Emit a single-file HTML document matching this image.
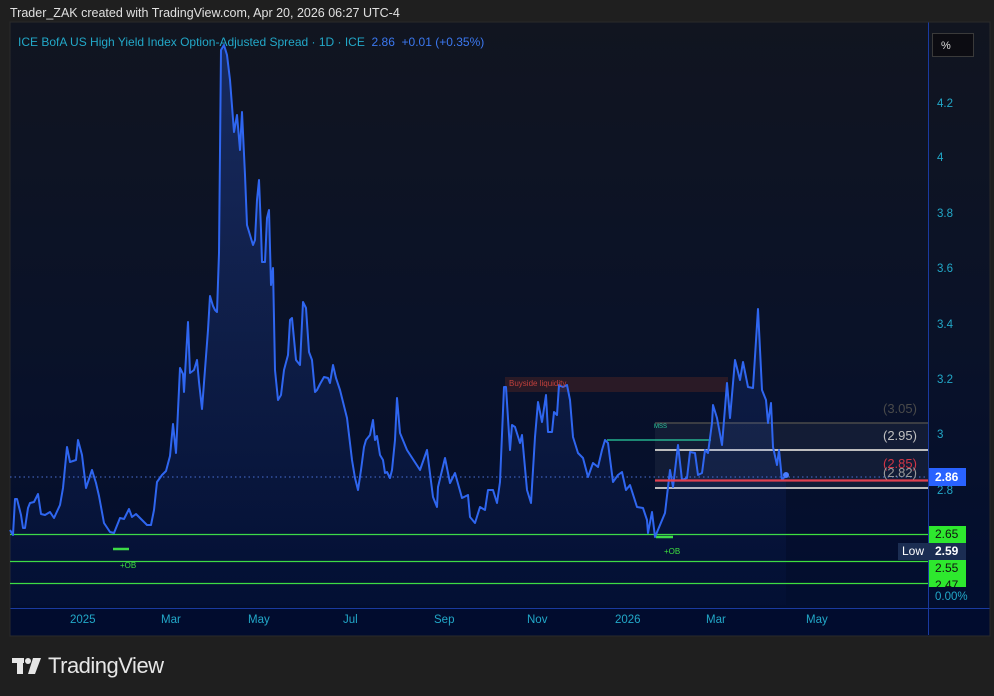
<!DOCTYPE html>
<html><head><meta charset="utf-8"><style>
body{margin:0;width:994px;height:696px;background:#1f1f1f;font-family:"Liberation Sans",sans-serif;position:relative;overflow:hidden}
.t{position:absolute;white-space:nowrap}
</style></head><body>
<div class="t" style="left:10px;top:6px;font-size:12.5px;color:#e0e0e0">Trader_ZAK created with TradingView.com, Apr 20, 2026 06:27 UTC-4</div>
<svg width="994" height="696" style="position:absolute;left:0;top:0">
<defs>
<linearGradient id="bg" x1="0" y1="0" x2="0" y2="1"><stop offset="0" stop-color="#111520"/><stop offset="0.5" stop-color="#0a1228"/><stop offset="1" stop-color="#010d30"/></linearGradient>
<linearGradient id="fl" x1="0" y1="0" x2="0" y2="1"><stop offset="0" stop-color="#2962ff" stop-opacity="0.28"/><stop offset="1" stop-color="#2962ff" stop-opacity="0.02"/></linearGradient>
</defs>
<rect x="10" y="22" width="980" height="614" fill="url(#bg)"/>
<rect x="10" y="608" width="980" height="27" fill="#010c2e"/>
<line x1="10" y1="608.5" x2="990" y2="608.5" stroke="#1a3aa0"/>
<line x1="928.5" y1="22" x2="928.5" y2="635" stroke="#1a3aa0"/>
<rect x="10" y="22" width="980" height="614" fill="none" stroke="#2a2a2a"/>
<rect x="505" y="377" width="223" height="15" fill="#2a1a26"/>
<rect x="655" y="423" width="273" height="65" fill="#ffffff" fill-opacity="0.05"/>
<line x1="655" y1="423" x2="928" y2="423" stroke="#4a4a4a" stroke-width="1.5"/>
<line x1="655" y1="450" x2="928" y2="450" stroke="#bdbdbd" stroke-width="2"/>
<line x1="655" y1="488" x2="928" y2="488" stroke="#bdbdbd" stroke-width="2"/>
<line x1="607" y1="440" x2="711" y2="440" stroke="#2ad0a0" stroke-width="1.2"/>
<line x1="10" y1="477" x2="928" y2="477" stroke="#4a6fd0" stroke-dasharray="1.5,3"/>
<line x1="10" y1="534.5" x2="928" y2="534.5" stroke="#3ee03e" stroke-width="1.2"/>
<line x1="10" y1="561.5" x2="928" y2="561.5" stroke="#3ee03e" stroke-width="1.2"/>
<line x1="10" y1="583.5" x2="928" y2="583.5" stroke="#3ee03e" stroke-width="1.2"/>
<line x1="113" y1="549" x2="129" y2="549" stroke="#3ee03e" stroke-width="2.5"/>
<line x1="656" y1="537" x2="673" y2="537" stroke="#3ee03e" stroke-width="2.5"/>
<polygon fill="url(#fl)" points="10,605 10,530 13,535 15,499 17,499 21,515 23,528 25,528 28,508 30,503 34,502 38,494 41,514 45,515 50,512 54,518 60,505 63,488 67,447 70,462 76,460 78,440 82,455 86,488 92,470 96,483 99,496 104,523 110,532 114,533 120,518 124,519 129,509 132,517 136,514 142,520 147,525 151,525 154,510 157,482 162,475 166,471 170,456 173,424 176,453 180,368 183,374 184,392 188,322 190,373 194,370 197,360 199,382 202,409 208,330 210,296 213,306 215,310 217,312 219,253 221,50 224,45 227,55 230,80 234,132 237,115 240,150 242,112 245,175 247,225 250,235 253,245 255,240 257,200 259,180 261,230 262,262 265,262 267,218 269,210 271,285 273,268 275,370 278,400 281,395 284,370 288,355 290,320 292,318 296,360 300,365 303,302 306,308 309,352 312,360 315,392 317,390 320,384 324,377 328,378 330,383 333,365 336,378 340,390 347,418 352,460 355,478 358,490 361,470 364,447 366,440 370,435 373,420 375,440 377,436 380,455 383,460 385,473 387,472 390,478 392,470 395,440 397,398 400,433 407,450 420,470 427,450 433,497 437,507 438,487 445,458 450,483 455,473 462,498 468,495 470,517 475,523 480,507 485,510 488,490 493,490 497,503 500,482 504,387 506,387 510,450 512,425 515,427 520,443 522,435 527,490 531,503 535,437 538,402 542,422 546,395 548,432 552,432 554,412 557,415 559,385 563,387 567,385 570,400 573,437 578,453 583,458 588,477 593,463 598,467 602,450 605,440 608,443 613,482 618,475 622,472 626,490 630,485 637,507 643,508 647,520 648,533 652,512 655,537 660,525 665,513 670,470 673,487 678,445 682,480 687,478 690,452 695,453 698,475 702,473 705,450 708,453 712,423 713,405 717,418 722,445 727,383 730,418 735,360 740,380 743,362 748,387 753,388 758,309 762,390 766,400 768,423 771,403 773,447 777,465 779,450 782,480 786,475 786,605"/>
<polyline fill="none" stroke="#2f66f0" stroke-width="2" stroke-linejoin="round" points="10,530 13,535 15,499 17,499 21,515 23,528 25,528 28,508 30,503 34,502 38,494 41,514 45,515 50,512 54,518 60,505 63,488 67,447 70,462 76,460 78,440 82,455 86,488 92,470 96,483 99,496 104,523 110,532 114,533 120,518 124,519 129,509 132,517 136,514 142,520 147,525 151,525 154,510 157,482 162,475 166,471 170,456 173,424 176,453 180,368 183,374 184,392 188,322 190,373 194,370 197,360 199,382 202,409 208,330 210,296 213,306 215,310 217,312 219,253 221,50 224,45 227,55 230,80 234,132 237,115 240,150 242,112 245,175 247,225 250,235 253,245 255,240 257,200 259,180 261,230 262,262 265,262 267,218 269,210 271,285 273,268 275,370 278,400 281,395 284,370 288,355 290,320 292,318 296,360 300,365 303,302 306,308 309,352 312,360 315,392 317,390 320,384 324,377 328,378 330,383 333,365 336,378 340,390 347,418 352,460 355,478 358,490 361,470 364,447 366,440 370,435 373,420 375,440 377,436 380,455 383,460 385,473 387,472 390,478 392,470 395,440 397,398 400,433 407,450 420,470 427,450 433,497 437,507 438,487 445,458 450,483 455,473 462,498 468,495 470,517 475,523 480,507 485,510 488,490 493,490 497,503 500,482 504,387 506,387 510,450 512,425 515,427 520,443 522,435 527,490 531,503 535,437 538,402 542,422 546,395 548,432 552,432 554,412 557,415 559,385 563,387 567,385 570,400 573,437 578,453 583,458 588,477 593,463 598,467 602,450 605,440 608,443 613,482 618,475 622,472 626,490 630,485 637,507 643,508 647,520 648,533 652,512 655,537 660,525 665,513 670,470 673,487 678,445 682,480 687,478 690,452 695,453 698,475 702,473 705,450 708,453 712,423 713,405 717,418 722,445 727,383 730,418 735,360 740,380 743,362 748,387 753,388 758,309 762,390 766,400 768,423 771,403 773,447 777,465 779,450 782,480 786,475"/>
<line x1="655" y1="480.5" x2="928" y2="480.5" stroke="#e0404f" stroke-width="2.2"/>
<circle cx="786" cy="475" r="3" fill="#4a7dff"/>
<g fill="#e6e6e6"><rect x="12" y="658" width="12" height="5"/><rect x="17" y="658" width="6" height="16"/><circle cx="28" cy="661" r="3"/><polygon points="33,658 41,658 35,674 28,674"/></g>
</svg>
<div class="t" style="left:18px;top:35px;font-size:12px;color:#22a8c8">ICE BofA US High Yield Index Option-Adjusted Spread · 1D · ICE <span style="color:#3b78f0">&nbsp;2.86 &nbsp;+0.01 (+0.35%)</span></div>
<div class="t" style="left:932px;top:33px;width:42px;height:24px;border:1px solid #3a3a3a;background:#0c0c12;color:#ddd;font-size:11px;line-height:24px;padding-left:8px;box-sizing:border-box">%</div>
<div class="t" style="left:509px;top:379px;font-size:8px;color:#c0403c">Buyside liquidity</div>
<div class="t" style="left:654px;top:424px;font-size:6px;color:#2ad0a0">MSS</div>
<div class="t" style="left:120px;top:561px;font-size:8px;color:#3ee03e">+OB</div>
<div class="t" style="left:664px;top:547px;font-size:8px;color:#3ee03e">+OB</div>
<div class="t" style="left:883px;top:401px;font-size:13px;color:#4a4a4a">(3.05)</div>
<div class="t" style="left:883px;top:428px;font-size:13px;color:#c0c0c0">(2.95)</div>
<div class="t" style="left:883px;top:456px;font-size:13px;color:#d03545">(2.85)</div>
<div class="t" style="left:883px;top:465px;font-size:13px;color:#9a9a9a">(2.82)</div>
<div style="position:absolute;left:937px;top:0;font-size:11.5px;color:#22a8c8">
<div class="t" style="top:98px">4.2</div><div class="t" style="top:152px">4</div><div class="t" style="top:208px">3.8</div><div class="t" style="top:263px">3.6</div><div class="t" style="top:319px">3.4</div><div class="t" style="top:374px">3.2</div><div class="t" style="top:429px">3</div><div class="t" style="top:485px">2.8</div><div class="t" style="top:591px;left:-2px">0.00%</div></div>
<div class="t" style="left:929px;top:468px;width:37px;height:18px;background:#2962ff;color:#fff;font-size:12px;font-weight:bold;line-height:18px;padding-left:6px;box-sizing:border-box">2.86</div>
<div class="t" style="left:929px;top:526px;width:37px;height:17px;background:#2ee82e;color:#111;font-size:12px;line-height:17px;padding-left:6px;box-sizing:border-box">2.65</div>
<div class="t" style="left:898px;top:543px;width:31px;height:17px;background:#1b2d52;color:#fff;font-size:12px;line-height:17px;padding-left:4px;box-sizing:border-box">Low</div>
<div class="t" style="left:929px;top:543px;width:37px;height:17px;background:#1b2d52;color:#fff;font-size:12px;font-weight:bold;line-height:17px;padding-left:6px;box-sizing:border-box">2.59</div>
<div class="t" style="left:929px;top:560px;width:37px;height:17px;background:#2ee82e;color:#111;font-size:12px;line-height:17px;padding-left:6px;box-sizing:border-box">2.55</div>
<div class="t" style="left:929px;top:577px;width:37px;height:10px;background:#2ee82e;color:#111;font-size:12px;line-height:17px;padding-left:6px;box-sizing:border-box;overflow:hidden">2.47</div>
<div style="position:absolute;top:614px;font-size:11.5px;color:#22a8c8">
<div class="t" style="left:70px">2025</div><div class="t" style="left:161px">Mar</div><div class="t" style="left:248px">May</div><div class="t" style="left:343px">Jul</div><div class="t" style="left:434px">Sep</div><div class="t" style="left:527px">Nov</div><div class="t" style="left:615px">2026</div><div class="t" style="left:706px">Mar</div><div class="t" style="left:806px">May</div></div>
<div class="t" style="left:48px;top:653px;font-size:22px;color:#e6e6e6;letter-spacing:-0.5px">TradingView</div>
</body></html>
